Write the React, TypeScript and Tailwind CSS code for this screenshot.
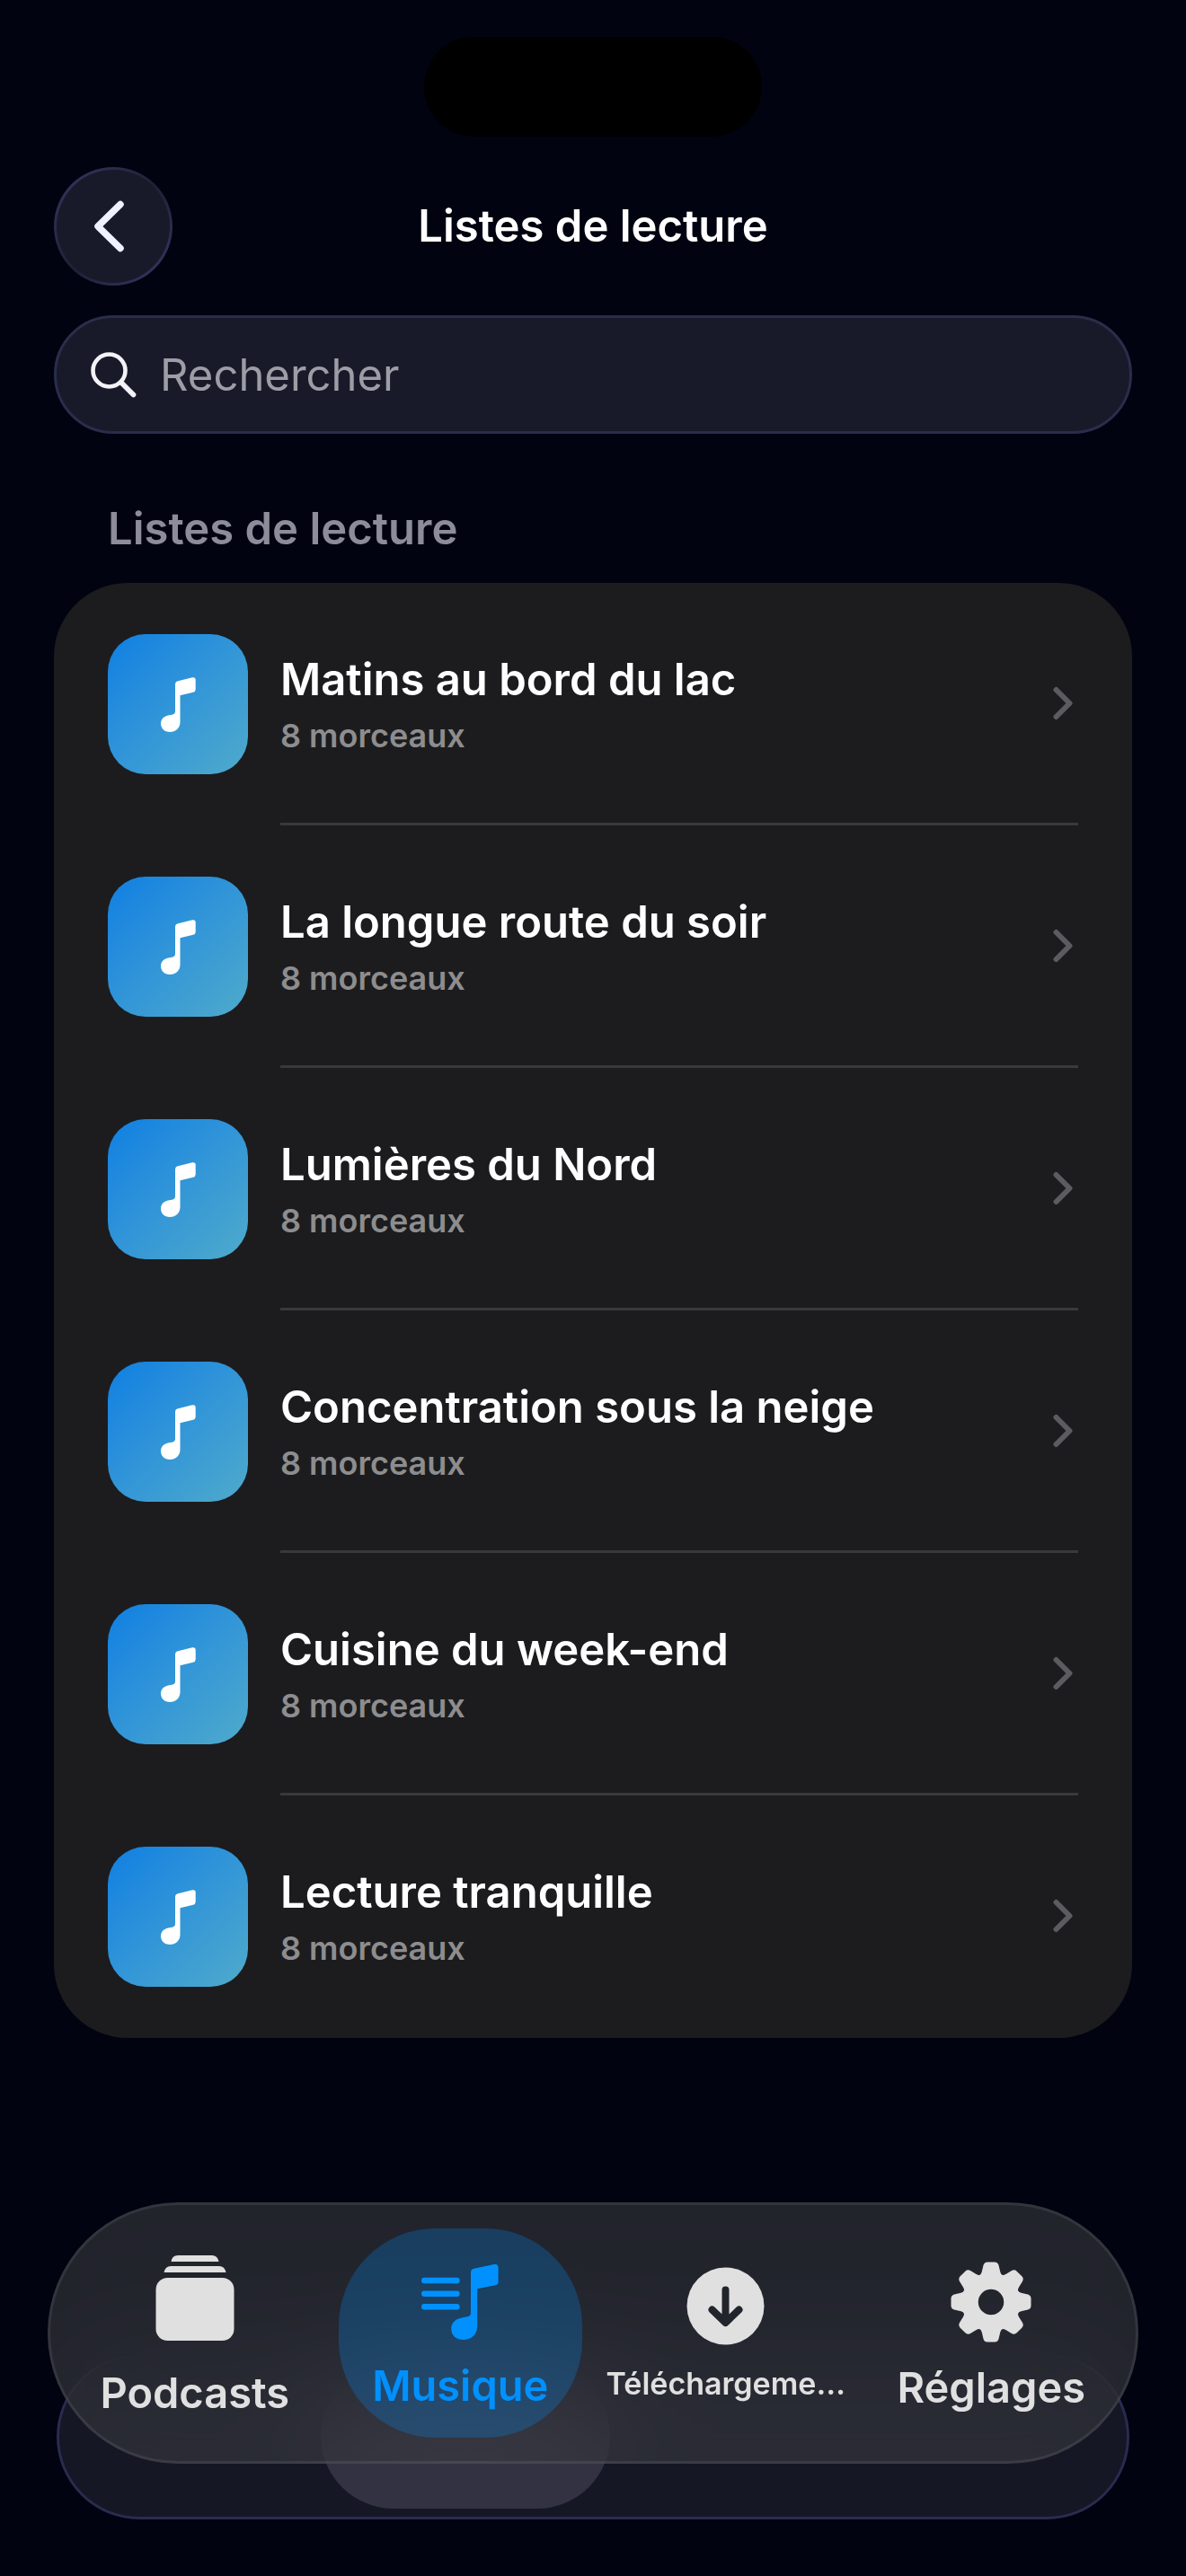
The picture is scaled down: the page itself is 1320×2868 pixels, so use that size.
import React, { useState } from "react";

interface IPlaylist {
  id: number;
  title: string;
  tracks: number;
}

interface ITab {
  id: string;
  label: string;
  labelClass: string;
  icon: React.ReactNode;
}

const playlists: IPlaylist[] = [
  { id: 1, title: "Matins au bord du lac", tracks: 8 },
  { id: 2, title: "La longue route du soir", tracks: 8 },
  { id: 3, title: "Lumières du Nord", tracks: 8 },
  { id: 4, title: "Concentration sous la neige", tracks: 8 },
  { id: 5, title: "Cuisine du week-end", tracks: 8 },
  { id: 6, title: "Lecture tranquille", tracks: 8 },
];

const NoteIcon = () => (
  <svg width="39" height="61" viewBox="0 0 39 61" fill="white" aria-hidden="true">
    <path d="M16 8Q16 5 19 4.2L35 0.3Q38.7 -0.3 38.7 3V13.5Q38.7 16 36 16.8L21.5 20.2V50C21.5 56.5 16.5 61 10 61C4 61 0 57 0 51.5C0 46.5 3.5 43.5 8 42.5L13.5 41.4Q16 40.8 16 38.5Z" />
  </svg>
);

const PodcastsIcon = () => (
  <svg width="88" height="95" viewBox="0 0 88 95" fill="currentColor" aria-hidden="true">
    <path d="M17.5 7Q18.5 0 25 0H63Q69 0 70.5 7Z" />
    <path d="M9.5 19Q11 12 17 12H71Q77 12 78.5 19Z" />
    <rect x="0.5" y="25" width="87" height="70" rx="13" />
  </svg>
);

const MusicIcon = () => (
  <svg width="86" height="86" viewBox="0 0 86 86" fill="currentColor" aria-hidden="true">
    <path
      d="M3.2 19H39.5M3.2 33.7H39.5M3.2 48.3H39.5"
      stroke="currentColor"
      strokeWidth="6.4"
      strokeLinecap="round"
    />
    <path d="M55 10Q55 6.6 58.4 5.7L81 1.1Q85.6 0.3 85.6 4.5V20.5Q85.6 23.6 82.5 24.3L62.2 28.2V70C62.2 79 55.5 85 46.5 85C38.5 85 33.2 80 33.2 73C33.2 66.5 37.5 62.2 44 60.8L52 59Q55 58.2 55 55Z" />
  </svg>
);

const DownloadIcon = () => (
  <svg width="87" height="87" viewBox="0 0 87 87" aria-hidden="true">
    <circle cx="43.5" cy="43.5" r="43" fill="currentColor" />
    <path
      d="M43.5 25.5V61M28.5 47.5L43.5 62L58.5 47.5"
      fill="none"
      stroke="#23252c"
      strokeWidth="8"
      strokeLinecap="round"
      strokeLinejoin="round"
    />
  </svg>
);

const GearIcon = () => (
  <svg width="90" height="90" viewBox="-45 -45 90 90" fill="currentColor" aria-hidden="true">
    {[0, 45, 90, 135, 180, 225, 270, 315].map((deg) => (
      <path
        key={deg}
        transform={`rotate(${deg})`}
        d="M-13 -29Q-11 -31 -10.3 -33.5L-8.5 -41Q-7.5 -44.5 -4 -44.5H4Q7.5 -44.5 8.5 -41L10.3 -33.5Q11 -31 13 -29Z"
      />
    ))}
    <circle r="23.5" fill="none" stroke="currentColor" strokeWidth="18.5" />
  </svg>
);

const tabs: ITab[] = [
  { id: "podcasts", label: "Podcasts", labelClass: "text-[47px] leading-[60px] mt-7", icon: <PodcastsIcon /> },
  { id: "musique", label: "Musique", labelClass: "text-[47px] leading-[60px] mt-5", icon: <MusicIcon /> },
  { id: "telechargements", label: "Téléchargeme…", labelClass: "text-[34px] leading-[54px] mt-4", icon: <DownloadIcon /> },
  { id: "reglages", label: "Réglages", labelClass: "text-[47px] leading-[60px] mt-5", icon: <GearIcon /> },
];

const PlaylistRow: React.FC<{ playlist: IPlaylist; last: boolean }> = ({ playlist, last }) => (
  <li>
    <a href={`#playlist-${playlist.id}`} className="flex h-[270px] gap-9 px-[60px]">
      <span className="mt-[57px] flex size-[156px] shrink-0 items-center justify-center rounded-[42px] bg-linear-to-br from-[#0c7fe2] to-[#4faacb]">
        <NoteIcon />
      </span>
      <span
        className={`flex min-w-0 flex-1 items-center justify-between border-b-[3px] ${
          last ? "border-transparent" : "border-[#39393b]"
        }`}
      >
        <span className="flex min-w-0 flex-col pt-1">
          <span className="truncate text-[49px] leading-[60px] font-semibold text-white">{playlist.title}</span>
          <span className="mt-2 text-[36px] leading-[48px] font-semibold text-[#8d8d8f]">
            {playlist.tracks} morceaux
          </span>
        </span>
        <svg className="mr-1.5 shrink-0" width="22" height="38" viewBox="0 0 22 38" fill="none" aria-hidden="true">
          <path d="M3.5 4L18.5 19L3.5 34" stroke="#5c5c60" strokeWidth="6" strokeLinecap="round" strokeLinejoin="round" />
        </svg>
      </span>
    </a>
  </li>
);

const App: React.FC = () => {
  const [query, setQuery] = useState("");
  const [activeTab, setActiveTab] = useState("musique");

  const visible = playlists.filter((p) => p.title.toLowerCase().includes(query.toLowerCase()));

  return (
    <div className="flex min-h-screen flex-col bg-[#010310] pt-[41px] font-['Inter','Liberation_Sans',sans-serif]">
      <div className="mx-auto h-[111px] w-[376px] rounded-full bg-black" />

      <header className="mx-[60px] mt-[34px] grid grid-cols-[132px_1fr_132px] items-center">
        <button
          type="button"
          aria-label="Retour"
          className="flex size-[132px] items-center justify-center rounded-full border-[3px] border-transparent [background:linear-gradient(#181a2a,#181a2a)_padding-box,linear-gradient(135deg,#353962,#1e2036_50%,#353962)_border-box]"
        >
          <svg className="mr-2.5" width="36" height="60" viewBox="0 0 36 60" fill="none" aria-hidden="true">
            <path d="M31 5.5L6 30L31 54.5" stroke="#f0f1ff" strokeWidth="7.5" strokeLinecap="round" strokeLinejoin="round" />
          </svg>
        </button>
        <h1 className="text-center text-[49px] leading-[60px] font-semibold text-white">Listes de lecture</h1>
      </header>

      <main className="mx-[60px]">
        <div className="mt-[33px] flex h-[132px] items-center gap-[26px] rounded-full border-[3px] border-[#2a2d4b] bg-[#181a2a] pl-[38px]">
          <svg width="51" height="51" viewBox="0 0 51 51" fill="none" stroke="#f2f2f7" aria-hidden="true">
            <circle cx="20.5" cy="20.5" r="18" strokeWidth="4.6" />
            <path d="M34 34L47.5 47.5" strokeWidth="5.6" strokeLinecap="round" />
          </svg>
          <input
            type="text"
            aria-label="Rechercher"
            value={query}
            onChange={(e) => setQuery(e.target.value)}
            placeholder="Rechercher"
            className="h-full min-w-0 flex-1 bg-transparent text-[49px] text-white outline-none placeholder:text-[#9d9da6]"
          />
        </div>

        <h2 className="mt-[76px] pl-[60px] text-[49px] leading-[60px] font-semibold text-[#8c8c9a]">
          Listes de lecture
        </h2>
        <ul className="mt-[30px] overflow-hidden rounded-[82px] bg-[#1c1c1e]">
          {visible.map((p, i) => (
            <PlaylistRow key={p.id} playlist={p} last={i === visible.length - 1} />
          ))}
        </ul>
      </main>

      <div className="relative mx-[53px] mt-auto mb-[125px]">
        {/* system tab bar peeking out from under the floating one */}
        <div className="absolute inset-x-2.5 top-[169px] h-[184px] rounded-full border-[3px] border-[#292c4e] bg-[#151725]">
          <div className="mt-[7px] ml-[291px] h-[162px] w-[322px] rounded-full bg-[#323242]" />
        </div>

        <nav className="relative flex h-[291px] rounded-full border-[3px] border-white/8 bg-[rgba(57,58,63,0.6)] px-[13px] py-[26px] backdrop-blur-[60px]">
          {tabs.map((tab) => (
            <button
              key={tab.id}
              type="button"
              onClick={() => setActiveTab(tab.id)}
              className={`mx-3 flex min-w-0 flex-1 flex-col items-center justify-center rounded-[108px] pt-2.5 ${
                tab.id === activeTab ? "bg-[#0091ff]/25 text-[#0091ff]" : "text-[#e0e0e0]"
              }`}
            >
              {tab.icon}
              <span className={`${tab.labelClass} font-semibold whitespace-nowrap`}>{tab.label}</span>
            </button>
          ))}
        </nav>
      </div>
    </div>
  );
};

export default App;
